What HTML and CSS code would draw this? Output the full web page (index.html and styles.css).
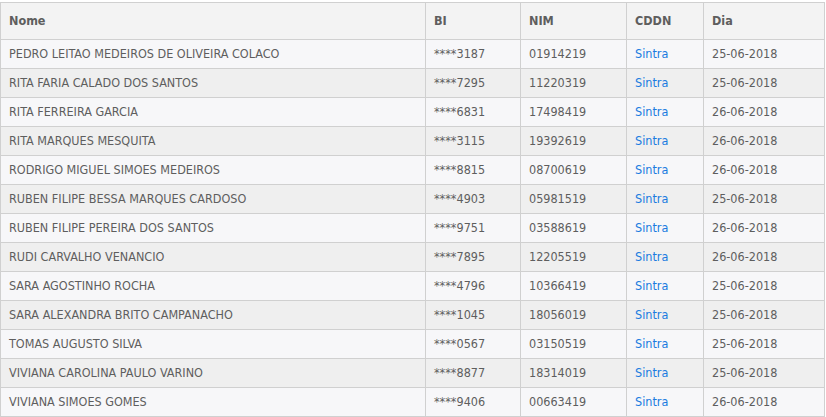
FILE: index.html
```html
<!DOCTYPE html>
<html>
<head>
<meta charset="utf-8">
<link rel="stylesheet" href="styles.css">
</head>
<body>
<table class="grid">
  <thead>
    <tr><th class="c-nome">Nome</th><th class="c-bi">BI</th><th class="c-nim">NIM</th><th class="c-cddn">CDDN</th><th class="c-dia">Dia</th></tr>
  </thead>
  <tbody>
    <tr><td>PEDRO LEITAO MEDEIROS DE OLIVEIRA COLACO</td><td>****3187</td><td>01914219</td><td><a class="link">Sintra</a></td><td>25-06-2018</td></tr>
    <tr><td>RITA FARIA CALADO DOS SANTOS</td><td>****7295</td><td>11220319</td><td><a class="link">Sintra</a></td><td>25-06-2018</td></tr>
    <tr><td>RITA FERREIRA GARCIA</td><td>****6831</td><td>17498419</td><td><a class="link">Sintra</a></td><td>26-06-2018</td></tr>
    <tr><td>RITA MARQUES MESQUITA</td><td>****3115</td><td>19392619</td><td><a class="link">Sintra</a></td><td>26-06-2018</td></tr>
    <tr><td>RODRIGO MIGUEL SIMOES MEDEIROS</td><td>****8815</td><td>08700619</td><td><a class="link">Sintra</a></td><td>26-06-2018</td></tr>
    <tr><td>RUBEN FILIPE BESSA MARQUES CARDOSO</td><td>****4903</td><td>05981519</td><td><a class="link">Sintra</a></td><td>25-06-2018</td></tr>
    <tr><td>RUBEN FILIPE PEREIRA DOS SANTOS</td><td>****9751</td><td>03588619</td><td><a class="link">Sintra</a></td><td>26-06-2018</td></tr>
    <tr><td>RUDI CARVALHO VENANCIO</td><td>****7895</td><td>12205519</td><td><a class="link">Sintra</a></td><td>26-06-2018</td></tr>
    <tr><td>SARA AGOSTINHO ROCHA</td><td>****4796</td><td>10366419</td><td><a class="link">Sintra</a></td><td>25-06-2018</td></tr>
    <tr><td>SARA ALEXANDRA BRITO CAMPANACHO</td><td>****1045</td><td>18056019</td><td><a class="link">Sintra</a></td><td>25-06-2018</td></tr>
    <tr><td>TOMAS AUGUSTO SILVA</td><td>****0567</td><td>03150519</td><td><a class="link">Sintra</a></td><td>25-06-2018</td></tr>
    <tr><td>VIVIANA CAROLINA PAULO VARINO</td><td>****8877</td><td>18314019</td><td><a class="link">Sintra</a></td><td>25-06-2018</td></tr>
    <tr><td>VIVIANA SIMOES GOMES</td><td>****9406</td><td>00663419</td><td><a class="link">Sintra</a></td><td>26-06-2018</td></tr>
  </tbody>
</table>
</body>
</html>
```
FILE: styles.css
```css
html, body {
  margin: 0;
  padding: 0;
  background: #ffffff;
}
body {
  padding-top: 2px;
  font-family: "DejaVu Sans Condensed", "DejaVu Sans", sans-serif;
  font-size: 12.5px;
  color: #5e5e5e;
}
.grid {
  border-collapse: collapse;
  width: 825px;
  table-layout: fixed;
}
.grid th, .grid td {
  border: 1px solid #d0d0d0;
  padding: 0 8px 1px;
  text-align: left;
  white-space: nowrap;
  line-height: 16px;
}
.grid th {
  height: 35px;
  font-weight: bold;
  background: #f3f3f3;
  color: #5e5e5e;
}
.grid td {
  height: 27px;
}
.grid tbody tr:nth-child(odd) td { background: #f7f7f9; }
.grid tbody tr:nth-child(even) td { background: #efefef; }
.c-nome { width: 408px; }
.c-bi { width: 78px; }
.c-nim { width: 89px; }
.c-cddn { width: 60px; }
.link { color: #1a7be0; }
```
